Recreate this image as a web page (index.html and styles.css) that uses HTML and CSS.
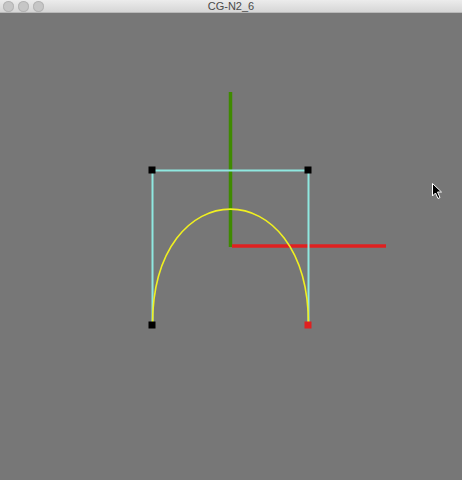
FILE: index.html
```html
<!DOCTYPE html>
<html>
<head>
<meta charset="utf-8">
<link rel="stylesheet" href="styles.css">
</head>
<body>
<div class="window">
  <div class="titlebar">
    <div class="lights">
      <span class="light"></span><span class="light"></span><span class="light"></span>
    </div>
    <div class="title">CG-N2_6</div>
  </div>
  <div class="canvas">
    <svg class="scene" width="462" height="467" viewBox="0 13 462 467" xmlns="http://www.w3.org/2000/svg">
      <line x1="230.5" y1="92" x2="230.5" y2="247" stroke="#3f8a00" stroke-width="3.5"/>
      <line x1="232" y1="246" x2="386" y2="246" stroke="#e02020" stroke-width="3.5"/>
      <polyline points="152.5,325 152.5,170.5 308.5,170.5 308.5,325" fill="none" stroke="#8fe8e0" stroke-width="2"/>
      <path d="M152.5,325 C152.5,170.5 308.5,170.5 308.5,325" fill="none" stroke="#f0f020" stroke-width="1.6"/>
      <rect x="148.5" y="166.5" width="7" height="7" fill="#000"/>
      <rect x="304.5" y="166.5" width="7" height="7" fill="#000"/>
      <rect x="148.5" y="321.5" width="7" height="7" fill="#000"/>
      <rect x="304.5" y="321.5" width="7" height="7" fill="#e02020"/>
      <path d="M432.5,183.5 L432.5,196 L435.5,193 L438,198.5 L440,197.5 L437.5,192 L441.5,192 Z" fill="#000" stroke="#fff" stroke-width="1"/>
    </svg>
  </div>
</div>
</body>
</html>
```
FILE: styles.css
```css
html, body {
  margin: 0;
  padding: 0;
  background: #777777;
}
.window {
  width: 462px;
  height: 480px;
  display: flex;
  flex-direction: column;
  overflow: hidden;
}
.titlebar {
  height: 13px;
  flex: none;
  background: linear-gradient(#ececec, #d6d6d6);
  border-bottom: 1px solid #b9b9b9;
  box-sizing: border-box;
  position: relative;
  display: flex;
  align-items: center;
}
.lights {
  display: flex;
  gap: 4px;
  padding-left: 3px;
}
.light {
  width: 11px;
  height: 11px;
  border-radius: 50%;
  background: #c6c6c6;
  box-shadow: inset 0 0 0 1px #b4b4b4;
}
.title {
  position: absolute;
  left: 0;
  right: 0;
  top: 0;
  text-align: center;
  font-family: "Liberation Sans", Arial, sans-serif;
  font-size: 11px;
  line-height: 12px;
  color: #4a4a4a;
}
.canvas {
  flex: 1;
  background: #777777;
}
.scene {
  display: block;
}
```
